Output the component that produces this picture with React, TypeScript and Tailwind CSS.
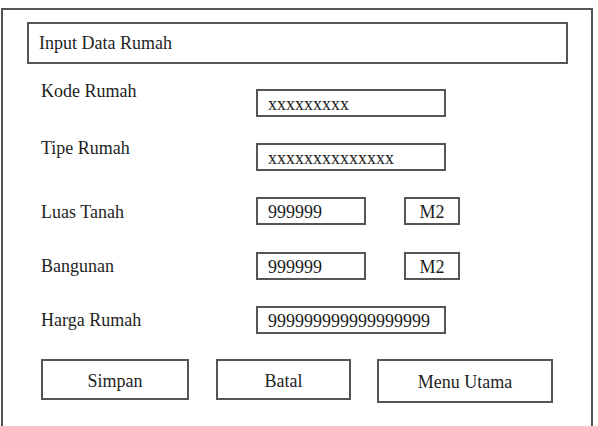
import React from "react";

type Row = {
  label: string;
  value: string;
  width: string;
  labelOffset: string;
  gap: string;
  unit?: boolean;
};

const rows: Row[] = [
  { label: "Kode Rumah", value: "xxxxxxxxx", width: "w-[190px]", labelOffset: "-mt-[8px]", gap: "mt-[25px]" },
  { label: "Tipe Rumah", value: "xxxxxxxxxxxxxx", width: "w-[190px]", labelOffset: "-mt-[5px]", gap: "mt-[26px]" },
  { label: "Luas Tanah", value: "999999", width: "w-[110px]", labelOffset: "mt-[5px]", gap: "mt-[26px]", unit: true },
  { label: "Bangunan", value: "999999", width: "w-[110px]", labelOffset: "mt-[4px]", gap: "mt-[27px]", unit: true },
  { label: "Harga Rumah", value: "999999999999999999", width: "w-[190px]", labelOffset: "mt-[4px]", gap: "mt-[26px]" },
];

function Field({ row }: { row: Row }) {
  return (
    <div className={`flex items-start ml-[14px] h-[28px] ${row.gap}`}>
      <div className={`w-[215px] leading-[20px] ${row.labelOffset}`}>{row.label}</div>
      <div className={`${row.width} h-[28px] border-2 border-[#555] pl-[10px] pt-[3px] leading-[20px]`}>
        {row.value}
      </div>
      {row.unit && (
        <div className="ml-[38px] w-[56px] h-[28px] border-2 border-[#555] pt-[3px] leading-[20px] text-center">
          M2
        </div>
      )}
    </div>
  );
}

export default function App() {
  return (
    <div
      className="w-[598px] h-[426px] overflow-hidden bg-white text-[18px] text-[#1e1e1e]"
      style={{ fontFamily: '"Liberation Serif", "Times New Roman", serif' }}
    >
      <div className="ml-px mt-2 w-[592px] h-[418px] border-2 border-b-0 border-[#555] pl-[24px] pt-[12px]">
        <div className="w-[541px] h-[42px] border-2 border-[#555] flex items-center pl-[10px] leading-[20px]">
          Input Data Rumah
        </div>

        {rows.map((row) => (
          <Field key={row.label} row={row} />
        ))}

        {/* action buttons */}
        <div className="flex items-start ml-[14px] mt-[25px]">
          <div className="w-[148px] h-[41px] border-2 border-[#555] flex items-center justify-center pt-[2px] leading-[20px]">
            Simpan
          </div>
          <div className="ml-[27px] w-[135px] h-[41px] border-2 border-[#555] flex items-center justify-center pt-[2px] leading-[20px]">
            Batal
          </div>
          <div className="ml-[26px] w-[176px] h-[44px] border-2 border-[#555] flex items-center justify-center pt-[2px] leading-[20px]">
            Menu Utama
          </div>
        </div>
      </div>
    </div>
  );
}
